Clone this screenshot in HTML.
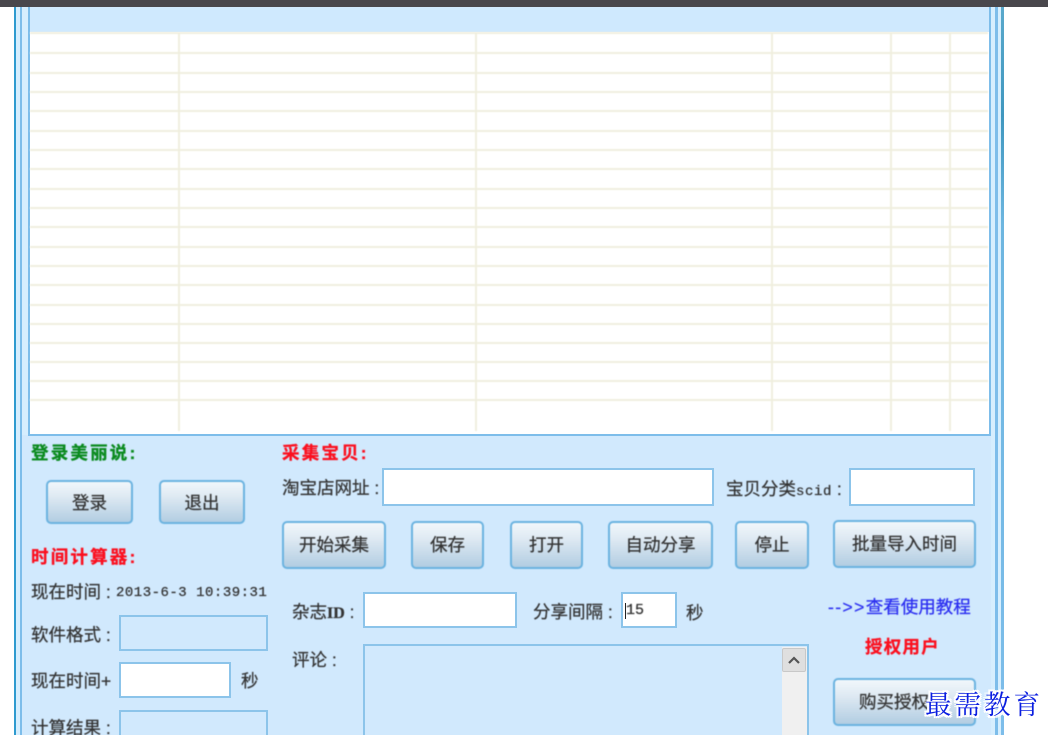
<!DOCTYPE html>
<html>
<head>
<meta charset="utf-8">
<style>
html,body{margin:0;padding:0;background:#fff;width:1048px;height:735px;overflow:hidden;}
#p{width:1048px;height:735px;position:relative;overflow:hidden;font-family:"Liberation Sans","Noto Sans CJK SC",sans-serif;}
.a{position:absolute;box-sizing:border-box;}
.t{position:absolute;white-space:nowrap;font-size:17.5px;line-height:20px;color:#333;filter:blur(.4px);-webkit-text-stroke:.25px #333;}
.b{font-weight:bold;font-size:17.5px;letter-spacing:2.2px;-webkit-text-stroke:.3px currentColor;}
.btn{position:absolute;box-sizing:border-box;border:2px solid #6bb3e0;border-radius:5px;padding-top:2px;background:linear-gradient(#f1f7fb 0%,#dfeaf3 35%,#b2cde2 100%);color:#333;font-size:17.5px;text-align:center;filter:blur(.4px);-webkit-text-stroke:.25px #333;white-space:nowrap;overflow:hidden;}
.in{position:absolute;box-sizing:border-box;border:2px solid #8cc4ea;background:#fff;filter:blur(.3px);}
.ro{background:#d1e9fd;}
#g{position:absolute;left:0;top:0;width:1048px;height:735px;filter:blur(.5px);}
.h{position:absolute;left:30px;width:958px;height:2px;background:#f0efdf;}
.v{position:absolute;top:33px;width:2px;height:398px;background:#f0efdf;}
</style>
</head>
<body>
<div id="p">
<div class="a" style="left:14px;top:7px;width:990px;height:728px;background:#d1e9fd;"></div>

<div class="a" style="left:14px;top:7px;width:2px;height:728px;background:#2f9bcf;"></div>
<div class="a" style="left:16px;top:7px;width:4px;height:728px;background:#d6eefe;"></div>
<div class="a" style="left:20px;top:7px;width:2px;height:728px;background:#7dbdea;"></div>
<div class="a" style="left:22px;top:7px;width:6px;height:428px;background:#d6eefe;"></div>
<div class="a" style="left:28px;top:7px;width:1.5px;height:429px;background:#7dbdea;"></div>

<div class="a" style="left:989px;top:7px;width:1.5px;height:429px;background:#7dbdea;"></div>
<div class="a" style="left:991px;top:7px;width:4px;height:728px;background:#d6eefe;"></div>
<div class="a" style="left:995px;top:7px;width:2.5px;height:728px;background:#7dbdea;"></div>
<div class="a" style="left:997.5px;top:7px;width:3px;height:728px;background:#d6eefe;"></div>
<div class="a" style="left:1000.5px;top:7px;width:3px;height:728px;background:linear-gradient(#5aa9cc 0,#3f97bf 15%,#6db6e0 30%,#7dbdea 100%);"></div>

<div class="a" style="left:29.5px;top:8px;width:959.5px;height:426px;background:#fff;"></div>
<div class="a" style="left:29.5px;top:8px;width:959.5px;height:24px;background:#cfe9fe;"></div>

<div id="g">
<div class="h" style="top:32px"></div>
<div class="h" style="top:52px"></div>
<div class="h" style="top:72px"></div>
<div class="h" style="top:91px"></div>
<div class="h" style="top:110px"></div>
<div class="h" style="top:130px"></div>
<div class="h" style="top:149px"></div>
<div class="h" style="top:168px"></div>
<div class="h" style="top:188px"></div>
<div class="h" style="top:207px"></div>
<div class="h" style="top:226px"></div>
<div class="h" style="top:246px"></div>
<div class="h" style="top:265px"></div>
<div class="h" style="top:284px"></div>
<div class="h" style="top:304px"></div>
<div class="h" style="top:323px"></div>
<div class="h" style="top:342px"></div>
<div class="h" style="top:361px"></div>
<div class="h" style="top:380px"></div>
<div class="h" style="top:399px"></div>
<div class="v" style="left:178px"></div>
<div class="v" style="left:475px"></div>
<div class="v" style="left:771px"></div>
<div class="v" style="left:890px"></div>
<div class="v" style="left:949px"></div>
</div>
<div class="a" style="left:28px;top:434px;width:962.5px;height:2px;background:#7dbdea;"></div>
<div class="a" style="left:0;top:0;width:1048px;height:7px;background:#49474c;"></div>

<div class="t b" style="left:31px;top:443px;color:#0a8a1e;">登录美丽说:</div>
<div class="btn" style="left:46px;top:480px;width:87px;height:44px;line-height:38px;">登录</div>
<div class="btn" style="left:159px;top:480px;width:86px;height:44px;line-height:38px;">退出</div>
<div class="t b" style="left:31px;top:547px;color:#fb0f1e;">时间计算器:</div>
<div class="t" style="left:31px;top:582px;">现在时间 :</div>
<div class="t" style="left:116px;top:583px;font-size:14px;font-family:'Liberation Mono','Noto Sans CJK SC',monospace;letter-spacing:.5px;">2013-6-3 10:39:31</div>
<div class="t" style="left:31px;top:625px;">软件格式 :</div>
<div class="in ro" style="left:119px;top:615px;width:149px;height:36px;"></div>
<div class="t" style="left:31px;top:671px;">现在时间+</div>
<div class="in" style="left:119px;top:662px;width:112px;height:36px;"></div>
<div class="t" style="left:241px;top:671px;">秒</div>
<div class="t" style="left:31px;top:718px;">计算结果 :</div>
<div class="in ro" style="left:119px;top:710px;width:149px;height:36px;"></div>

<div class="t b" style="left:282px;top:443px;color:#fb0f1e;">采集宝贝:</div>
<div class="t" style="left:282px;top:478px;">淘宝店网址 :</div>
<div class="in" style="left:382px;top:468px;width:332px;height:38px;"></div>
<div class="t" style="left:726px;top:479px;">宝贝分类<span style="font-family:'Liberation Mono',monospace;font-size:14px;letter-spacing:.6px;">scid</span> :</div>
<div class="in" style="left:849px;top:468px;width:126px;height:38px;"></div>

<div class="btn" style="left:282px;top:521px;width:104px;height:48px;line-height:41px;">开始采集</div>
<div class="btn" style="left:411px;top:521px;width:73px;height:48px;line-height:41px;">保存</div>
<div class="btn" style="left:510px;top:521px;width:73px;height:48px;line-height:41px;">打开</div>
<div class="btn" style="left:608px;top:521px;width:105px;height:48px;line-height:41px;">自动分享</div>
<div class="btn" style="left:735px;top:521px;width:74px;height:48px;line-height:41px;">停止</div>
<div class="btn" style="left:833px;top:520px;width:143px;height:48px;line-height:41px;">批量导入时间</div>

<div class="t" style="left:292px;top:602px;">杂志<span style="font-family:'Liberation Serif',serif;font-size:16px;font-weight:bold;">ID</span> :</div>
<div class="in" style="left:363px;top:592px;width:154px;height:36px;"></div>
<div class="t" style="left:533px;top:602px;">分享间隔 :</div>
<div class="in" style="left:621px;top:592px;width:56px;height:36px;"></div>
<div class="t" style="left:626px;top:601px;font-size:15px;font-family:'Liberation Mono',monospace;">15</div>
<div class="a" style="left:625px;top:603px;width:1px;height:16px;background:#222;"></div>
<div class="t" style="left:686px;top:603px;">秒</div>
<div class="t" style="left:828px;top:597px;color:#2a2df0;-webkit-text-stroke:.25px #2a2df0;"><span style="letter-spacing:1.4px;">--&gt;&gt;</span>查看使用教程</div>
<div class="t b" style="left:865px;top:637px;color:#fb0f1e;letter-spacing:1.2px;">授权用户</div>

<div class="t" style="left:292px;top:650px;">评论 :</div>
<div class="in ro" style="left:363px;top:644px;width:446px;height:110px;"></div>
<div class="a" style="left:782px;top:647px;width:25px;height:88px;background:#f0f0f0;"></div>
<div class="a" style="left:782px;top:648px;width:24px;height:24px;background:#dfdfdf;border:1px solid #c8c8c8;border-radius:2px;"></div>
<svg class="a" style="left:782px;top:648px;" width="24" height="24" viewBox="0 0 24 24"><path d="M7 15 L12 10 L17 15" fill="none" stroke="#555" stroke-width="2.2"/></svg>

<div class="btn" style="left:833px;top:678px;width:143px;height:48px;line-height:41px;text-align:left;padding-left:24px;">购买授权</div>

<div class="t" style="left:925px;top:686px;font-size:26.5px;line-height:34px;color:#0a1ee0;font-family:'Noto Serif CJK SC',serif;letter-spacing:3px;filter:none;-webkit-text-stroke:0;text-shadow:-2px 0 0 #fff,2px 0 0 #fff,0 -2px 0 #fff,0 2px 0 #fff,-2px -2px 0 #fff,2px 2px 0 #fff,-2px 2px 0 #fff,2px -2px 0 #fff;">最需教育</div>
</div>
</body>
</html>
